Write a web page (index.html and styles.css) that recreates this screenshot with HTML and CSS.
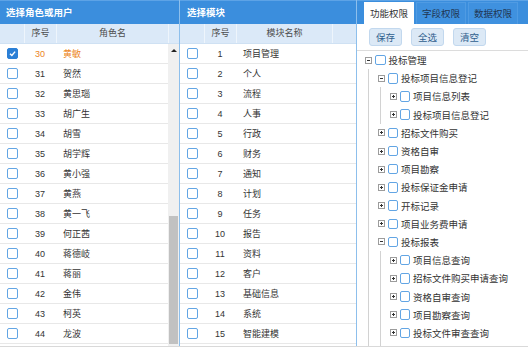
FILE: index.html
```html
<!DOCTYPE html>
<html lang="zh">
<head>
<meta charset="utf-8">
<link rel="stylesheet" href="styles.css">
</head>
<body>
<div class="app">
  <section class="panel roles">
    <div class="title">选择角色或用户</div>
    <div class="thead cols-roles">
      <div class="th"></div><div class="th">序号</div><div class="th">角色名</div><div class="th"></div>
    </div>
    <div class="tbody">
      <div class="rows">
        <div class="row cols-roles sel"><div class="c"><span class="cb on"><svg viewBox="0 0 10 10"><path d="M2.2 5.2 L4.3 7.2 L7.9 2.9" stroke="#fff" stroke-width="1.6" fill="none"/></svg></span></div><div class="num">30</div><div class="name">黄敏</div></div>
        <div class="row cols-roles"><div class="c"><span class="cb"></span></div><div class="num">31</div><div class="name">贺然</div></div>
        <div class="row cols-roles"><div class="c"><span class="cb"></span></div><div class="num">32</div><div class="name">黄思瑙</div></div>
        <div class="row cols-roles"><div class="c"><span class="cb"></span></div><div class="num">33</div><div class="name">胡广生</div></div>
        <div class="row cols-roles"><div class="c"><span class="cb"></span></div><div class="num">34</div><div class="name">胡雪</div></div>
        <div class="row cols-roles"><div class="c"><span class="cb"></span></div><div class="num">35</div><div class="name">胡学辉</div></div>
        <div class="row cols-roles"><div class="c"><span class="cb"></span></div><div class="num">36</div><div class="name">黄小强</div></div>
        <div class="row cols-roles"><div class="c"><span class="cb"></span></div><div class="num">37</div><div class="name">黄燕</div></div>
        <div class="row cols-roles"><div class="c"><span class="cb"></span></div><div class="num">38</div><div class="name">黄一飞</div></div>
        <div class="row cols-roles"><div class="c"><span class="cb"></span></div><div class="num">39</div><div class="name">何正茜</div></div>
        <div class="row cols-roles"><div class="c"><span class="cb"></span></div><div class="num">40</div><div class="name">蒋德岐</div></div>
        <div class="row cols-roles"><div class="c"><span class="cb"></span></div><div class="num">41</div><div class="name">蒋丽</div></div>
        <div class="row cols-roles"><div class="c"><span class="cb"></span></div><div class="num">42</div><div class="name">金伟</div></div>
        <div class="row cols-roles"><div class="c"><span class="cb"></span></div><div class="num">43</div><div class="name">柯英</div></div>
        <div class="row cols-roles"><div class="c"><span class="cb"></span></div><div class="num">44</div><div class="name">龙波</div></div>
      </div>
      <div class="scroll"><span class="arrow"></span><span class="thumb"></span></div>
    </div>
  </section>

  <section class="panel modules">
    <div class="title">选择模块</div>
    <div class="thead cols-mod">
      <div class="th"></div><div class="th">序号</div><div class="th">模块名称</div><div class="th"></div>
    </div>
    <div class="rows">
      <div class="row cols-mod"><div class="c"><span class="cb"></span></div><div class="num">1</div><div class="name">项目管理</div></div>
      <div class="row cols-mod"><div class="c"><span class="cb"></span></div><div class="num">2</div><div class="name">个人</div></div>
      <div class="row cols-mod"><div class="c"><span class="cb"></span></div><div class="num">3</div><div class="name">流程</div></div>
      <div class="row cols-mod"><div class="c"><span class="cb"></span></div><div class="num">4</div><div class="name">人事</div></div>
      <div class="row cols-mod"><div class="c"><span class="cb"></span></div><div class="num">5</div><div class="name">行政</div></div>
      <div class="row cols-mod"><div class="c"><span class="cb"></span></div><div class="num">6</div><div class="name">财务</div></div>
      <div class="row cols-mod"><div class="c"><span class="cb"></span></div><div class="num">7</div><div class="name">通知</div></div>
      <div class="row cols-mod"><div class="c"><span class="cb"></span></div><div class="num">8</div><div class="name">计划</div></div>
      <div class="row cols-mod"><div class="c"><span class="cb"></span></div><div class="num">9</div><div class="name">任务</div></div>
      <div class="row cols-mod"><div class="c"><span class="cb"></span></div><div class="num">10</div><div class="name">报告</div></div>
      <div class="row cols-mod"><div class="c"><span class="cb"></span></div><div class="num">11</div><div class="name">资料</div></div>
      <div class="row cols-mod"><div class="c"><span class="cb"></span></div><div class="num">12</div><div class="name">客户</div></div>
      <div class="row cols-mod"><div class="c"><span class="cb"></span></div><div class="num">13</div><div class="name">基础信息</div></div>
      <div class="row cols-mod"><div class="c"><span class="cb"></span></div><div class="num">14</div><div class="name">系统</div></div>
      <div class="row cols-mod"><div class="c"><span class="cb"></span></div><div class="num">15</div><div class="name">智能建模</div></div>
    </div>
  </section>

  <section class="panel perms">
    <div class="tabs">
      <div class="tab active">功能权限</div>
      <div class="tab">字段权限</div>
      <div class="tab">数据权限</div>
    </div>
    <div class="toolbar">
      <button class="btn">保存</button>
      <button class="btn">全选</button>
      <button class="btn">清空</button>
    </div>
    <div class="tree">
      <div class="node"><span class="ex"></span><span class="cb"></span><span class="lbl">投标管理</span></div>
      <div class="kids">
        <div class="node"><span class="ex"></span><span class="cb"></span><span class="lbl">投标项目信息登记</span></div>
        <div class="kids">
          <div class="node"><span class="ex plus"></span><span class="cb"></span><span class="lbl">项目信息列表</span></div>
          <div class="node"><span class="ex plus"></span><span class="cb"></span><span class="lbl">投标项目信息登记</span></div>
        </div>
        <div class="node"><span class="ex plus"></span><span class="cb"></span><span class="lbl">招标文件购买</span></div>
        <div class="node"><span class="ex plus"></span><span class="cb"></span><span class="lbl">资格自审</span></div>
        <div class="node"><span class="ex plus"></span><span class="cb"></span><span class="lbl">项目勘察</span></div>
        <div class="node"><span class="ex plus"></span><span class="cb"></span><span class="lbl">投标保证金申请</span></div>
        <div class="node"><span class="ex plus"></span><span class="cb"></span><span class="lbl">开标记录</span></div>
        <div class="node"><span class="ex plus"></span><span class="cb"></span><span class="lbl">项目业务费申请</span></div>
        <div class="node"><span class="ex"></span><span class="cb"></span><span class="lbl">投标报表</span></div>
        <div class="kids">
          <div class="node"><span class="ex plus"></span><span class="cb"></span><span class="lbl">项目信息查询</span></div>
          <div class="node"><span class="ex plus"></span><span class="cb"></span><span class="lbl">招标文件购买申请查询</span></div>
          <div class="node"><span class="ex plus"></span><span class="cb"></span><span class="lbl">资格自审查询</span></div>
          <div class="node"><span class="ex plus"></span><span class="cb"></span><span class="lbl">项目勘察查询</span></div>
          <div class="node"><span class="ex plus"></span><span class="cb"></span><span class="lbl">投标文件审查查询</span></div>
          <div class="node"><span class="ex plus"></span><span class="cb"></span></div>
        </div>
      </div>
    </div>
  </section>
</div>
</body>
</html>
```
FILE: styles.css
```css
* { box-sizing: border-box; margin: 0; padding: 0; }
html, body { background: #fff; }
body {
  width: 528px; height: 351px; overflow: hidden;
  font-family: "Liberation Sans", "Noto Sans CJK SC", sans-serif;
  font-size: 9px; color: #333;
}
.app { display: flex; height: 347px; border-bottom: 1px solid #d9d9d9; }
.panel { display: flex; flex-direction: column; overflow: hidden; }
.roles { width: 180px; border-right: 1px solid #8dbfec; }
.modules { width: 177px; border-right: 1px solid #8dbfec; }
.perms { flex: 1; }

.title {
  height: 24px; line-height: 23px; flex: none;
  background: #3b8edd; border-top: 1px solid #5da3e6;
  color: #fff; font-weight: bold; font-size: 9.5px;
  padding-left: 6px;
}
.modules .title { padding-left: 7px; }

.thead {
  display: grid; height: 20px; flex: none;
  background: #dbe9f8; border-bottom: 1px solid #cfe1f3;
}
.th {
  line-height: 19px; text-align: center; color: #4d4d4d;
  border-left: 1px solid #eef5fc;
}
.th:first-child { border-left: none; }
.cols-roles { grid-template-columns: 24px 32px 112px 1fr; }
.cols-mod { grid-template-columns: 24px 32px 96px 1fr; }

.tbody { display: flex; flex: 1; min-height: 0; }
.roles .rows { width: 168px; }
.modules .rows { flex: 1; }

.row {
  display: grid; height: 20px; align-items: center;
  border-bottom: 1px solid #e8e8e8;
}
.roles .row { grid-template-columns: 24px 32px 112px; }
.row .c { display: flex; justify-content: center; }
.row .num { text-align: center; }
.row .name { padding-left: 7px; }
.row.sel .num, .row.sel .name { color: #ec8524; }

.cb {
  display: inline-block; width: 11px; height: 11px; flex: none;
  border: 1px solid #62a5e4; border-radius: 2px; background: #fff;
}
.cb.on { background: #2b7fd6; border-color: #2b7fd6; }
.cb svg { display: block; width: 9px; height: 9px; }

.scroll {
  width: 11px; background: #f0f0f0;
  display: flex; flex-direction: column; align-items: center;
}
.arrow {
  margin-top: 5px; width: 0; height: 0;
  border-left: 3px solid transparent; border-right: 3px solid transparent;
  border-bottom: 3px solid #222;
}
.thumb { margin-top: auto; width: 9px; height: 128px; background: #c1c1c1; margin-bottom: 2px; }

.tabs {
  height: 24px; flex: none; display: flex; align-items: flex-end; gap: 2px;
  background: #3b8edd; border-top: 1px solid #5da3e6; padding-left: 7px;
}
.tab {
  width: 50px; height: 22px; line-height: 22px; text-align: center;
  font-size: 9.5px; color: #1f3652;
  background: #3f91df; border: 1px solid #4f9be3; border-bottom: none;
}
.tab.active { background: #fff; color: #333; border-color: #fff; }

.toolbar {
  height: 27px; flex: none; display: flex; align-items: center; gap: 9px;
  padding-left: 12px; border-bottom: 1px solid #dcdcdc;
}
.btn {
  width: 33px; height: 18px; font: inherit; font-size: 9.5px; color: #2f5f8e;
  background: #dce9f6; border: 1px solid #c2d8ee; border-radius: 3px;
}

.tree { font-size: 9.5px; padding-top: 0; }
.node {
  display: flex; align-items: center; height: 18.2px; padding-left: 8px;
}
.ex {
  position: relative; width: 7px; height: 7px; flex: none;
  border: 1px solid #9c9c9c; background: #fff; margin-right: 3px;
}
.ex::before {
  content: ""; position: absolute; left: 1px; right: 1px; top: 2px; height: 1px; background: #333;
}
.ex.plus::after {
  content: ""; position: absolute; top: 1px; bottom: 1px; left: 2px; width: 1px; background: #333;
}
.node .cb { width: 10.5px; height: 10.5px; margin-right: 3px; }
.lbl { white-space: nowrap; color: #333; }
.kids { margin-left: 11px; border-left: 1px solid #d2d2d2; }
.kids .node { padding-left: 8.5px; }
```
